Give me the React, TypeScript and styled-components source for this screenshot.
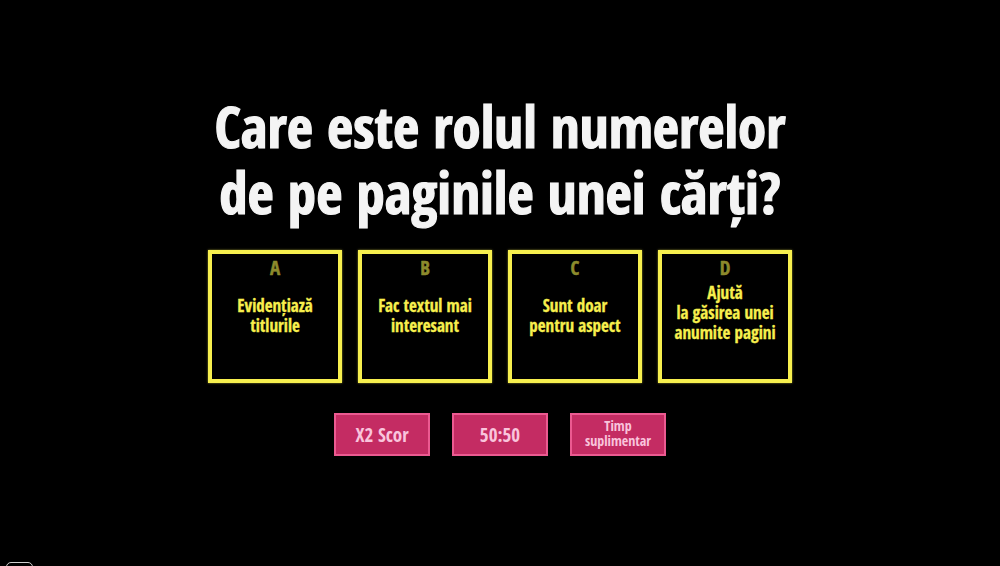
import React from "react";
import styled, { createGlobalStyle } from "styled-components";

const Global = createGlobalStyle`
  html, body { margin: 0; padding: 0; background: #000; }
  body { font-family: "Open Sans Condensed", "Roboto Condensed", "DejaVu Sans Condensed", sans-serif; }
  * { box-sizing: border-box; }
`;

const Stage = styled.div`
  width: 1000px;
  height: 566px;
  background: #000;
  display: flex;
  flex-direction: column;
  align-items: center;
  padding-top: 93px;
  position: relative;
  overflow: hidden;
`;

const Title = styled.h1`
  margin: 0;
  color: #f4f4f4;
  -webkit-text-stroke: 1.2px #f4f4f4;
  font-family: "Open Sans Condensed", "Roboto Condensed", sans-serif;
  font-weight: 700;
  font-size: 57px;
  line-height: 66px;
  text-align: center;
  white-space: nowrap;
`;

const Answers = styled.div`
  display: flex;
  gap: 16px;
  margin-top: 25px;
`;

const AnswerBox = styled.div`
  width: 134px;
  height: 133px;
  border: 4px solid #f7ef4e;
  box-shadow: 0 0 2px rgba(247, 239, 78, 0.6);
  display: flex;
  flex-direction: column;
  align-items: center;
  padding-top: 3px;
`;

const Letter = styled.div`
  color: #8c8a2c;
  -webkit-text-stroke: 0.5px #8c8a2c;
  font-weight: 700;
  font-size: 19px;
  line-height: 22px;
`;

const AnswerText = styled.div<{ $lines: number }>`
  color: #f7ef4e;
  -webkit-text-stroke: 0.3px #f7ef4e;
  font-weight: 700;
  font-size: 17px;
  line-height: 20px;
  text-align: center;
  margin-top: ${(p) => (p.$lines > 2 ? 4 : 17)}px;
  white-space: pre-line;
`;

const Tools = styled.div`
  display: flex;
  gap: 22px;
  margin-top: 30px;
`;

const ToolButton = styled.div<{ $small?: boolean }>`
  width: 96px;
  height: 43px;
  background: #c42c63;
  border: 2px solid #ec5a91;
  color: #f9c4dc;
  font-weight: 700;
  display: flex;
  align-items: center;
  justify-content: center;
  text-align: center;
  font-size: ${(p) => (p.$small ? "14px" : "19px")};
  line-height: ${(p) => (p.$small ? "15px" : "20px")};
  padding-bottom: ${(p) => (p.$small ? "3px" : "0")};
`;

const CornerTab = styled.div`
  position: absolute;
  left: 6px;
  bottom: -8px;
  width: 27px;
  height: 12px;
  border: 1px solid #cfcfcf;
  border-radius: 5px;
`;

const answers = [
  { l: "A", t: "Evidențiază\ntitlurile" },
  { l: "B", t: "Fac textul mai\ninteresant" },
  { l: "C", t: "Sunt doar\npentru aspect" },
  { l: "D", t: "Ajută\nla găsirea unei\nanumite pagini" },
];

export default function App() {
  return (
    <>
      <Global />
      <Stage>
        <Title>
          Care este rolul numerelor
          <br />
          de pe paginile unei cărți?
        </Title>
        <Answers>
          {answers.map((a) => (
            <AnswerBox key={a.l}>
              <Letter>{a.l}</Letter>
              <AnswerText $lines={a.t.split("\n").length}>{a.t}</AnswerText>
            </AnswerBox>
          ))}
        </Answers>
        <Tools>
          <ToolButton>X2 Scor</ToolButton>
          <ToolButton>50:50</ToolButton>
          <ToolButton $small>
            Timp
            <br />
            suplimentar
          </ToolButton>
        </Tools>
        <CornerTab />
      </Stage>
    </>
  );
}
